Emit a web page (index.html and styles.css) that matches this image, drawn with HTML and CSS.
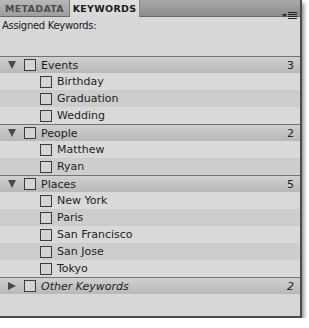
FILE: index.html
```html
<!DOCTYPE html>
<html lang="en">
  <head>
    <meta name="viewport" content="width=device-width, initial-scale=1.0" />
    <title>Keywords</title>
    <link rel="stylesheet" href="styles.css">
  </head>
  <body>
    <div class="panel">
      <div class="tab-bar">
        <div class="tab">METADATA</div>
        <div class="tab active">KEYWORDS</div>
        <div class="panel-menu">
          <svg width="15" height="8" viewBox="0 0 15 8">
            <path d="M0 2h5l-2.5 3z" fill="#222" />
            <path d="M6 0.5h9M6 2.5h9M6 4.5h9M6 6.5h9" stroke="#222" stroke-width="1" />
          </svg>
        </div>
      </div>
      <div class="assigned">Assigned Keywords:</div>
      <div class="keyword-list">
        <div class="group open">
          <div class="group-row">
            <span class="arrow"></span><span class="box"></span>
            <span class="label">Events</span><span class="count">3</span>
          </div>
          <div class="item"><span class="box"></span><span class="label">Birthday</span></div>
          <div class="item"><span class="box"></span><span class="label">Graduation</span></div>
          <div class="item"><span class="box"></span><span class="label">Wedding</span></div>
        </div>
        <div class="group open">
          <div class="group-row">
            <span class="arrow"></span><span class="box"></span>
            <span class="label">People</span><span class="count">2</span>
          </div>
          <div class="item"><span class="box"></span><span class="label">Matthew</span></div>
          <div class="item"><span class="box"></span><span class="label">Ryan</span></div>
        </div>
        <div class="group open">
          <div class="group-row">
            <span class="arrow"></span><span class="box"></span>
            <span class="label">Places</span><span class="count">5</span>
          </div>
          <div class="item"><span class="box"></span><span class="label">New York</span></div>
          <div class="item"><span class="box"></span><span class="label">Paris</span></div>
          <div class="item"><span class="box"></span><span class="label">San Francisco</span></div>
          <div class="item"><span class="box"></span><span class="label">San Jose</span></div>
          <div class="item"><span class="box"></span><span class="label">Tokyo</span></div>
        </div>
        <div class="group closed">
          <div class="group-row">
            <span class="arrow"></span><span class="box"></span>
            <span class="label other">Other Keywords</span><span class="count other">2</span>
          </div>
        </div>
      </div>
    </div>
  </body>
</html>
```
FILE: styles.css
```css
* {
  padding: 0;
  margin: 0;
  box-sizing: border-box;
}
body {
  background-color: #ffffff;
  font-family: "DejaVu Sans", sans-serif;
  color: #1e1e1e;
}
.panel {
  width: 302px;
  height: 318px;
  background-color: #d7d7d7;
  border-right: 2px solid #4a4a4a;
  border-bottom: 2px solid #4a4a4a;
  box-shadow: 2px 3px 4px rgba(0, 0, 0, 0.45);
  display: flex;
  flex-direction: column;
}
.tab-bar {
  height: 17px;
  display: flex;
  align-items: stretch;
  background: linear-gradient(#a8a8a8, #8c8c8c);
  border-bottom: 1px solid #6a6a6a;
}
.tab {
  width: 70px;
  font-size: 9.5px;
  font-weight: bold;
  letter-spacing: 0.3px;
  display: flex;
  align-items: center;
  justify-content: center;
  color: #4e4e4e;
  border-right: 1px solid #7a7a7a;
  background: linear-gradient(#b8b8b8, #9e9e9e);
}
.tab.active {
  color: #1a1a1a;
  background: linear-gradient(#e0e0e0, #d7d7d7);
  margin-bottom: -1px;
  border-right: 1px solid #8a8a8a;
}
.panel-menu {
  margin-left: auto;
  padding: 5px 3px 0 0;
}
.assigned {
  height: 39px;
  font-size: 10px;
  letter-spacing: -0.3px;
  padding: 3px 0 0 2px;
  color: #1a1a1a;
}
.group-row,
.item {
  height: 17px;
  display: flex;
  align-items: center;
  font-size: 11px;
}
.group-row {
  background: linear-gradient(#d0d0d0, #b8b8b8);
  border-top: 1px solid #737373;
  padding-left: 8px;
  padding-right: 6px;
}
.item {
  padding-left: 40px;
  background-color: #d9d9d9;
}
.item:nth-child(odd) {
  background-color: #cdcdcd;
}
.arrow {
  width: 0;
  height: 0;
  margin-right: 8px;
}
.open .arrow {
  border-left: 4px solid transparent;
  border-right: 4px solid transparent;
  border-top: 8px solid #4a4a4a;
}
.closed .arrow {
  border-top: 4px solid transparent;
  border-bottom: 4px solid transparent;
  border-left: 8px solid #4a4a4a;
}
.box {
  width: 12px;
  height: 12px;
  border: 1px solid #3c3c3c;
  background-color: #d4d4d4;
  margin-right: 5px;
}
.count {
  margin-left: auto;
  font-size: 11px;
}
.other {
  font-style: italic;
}
```
